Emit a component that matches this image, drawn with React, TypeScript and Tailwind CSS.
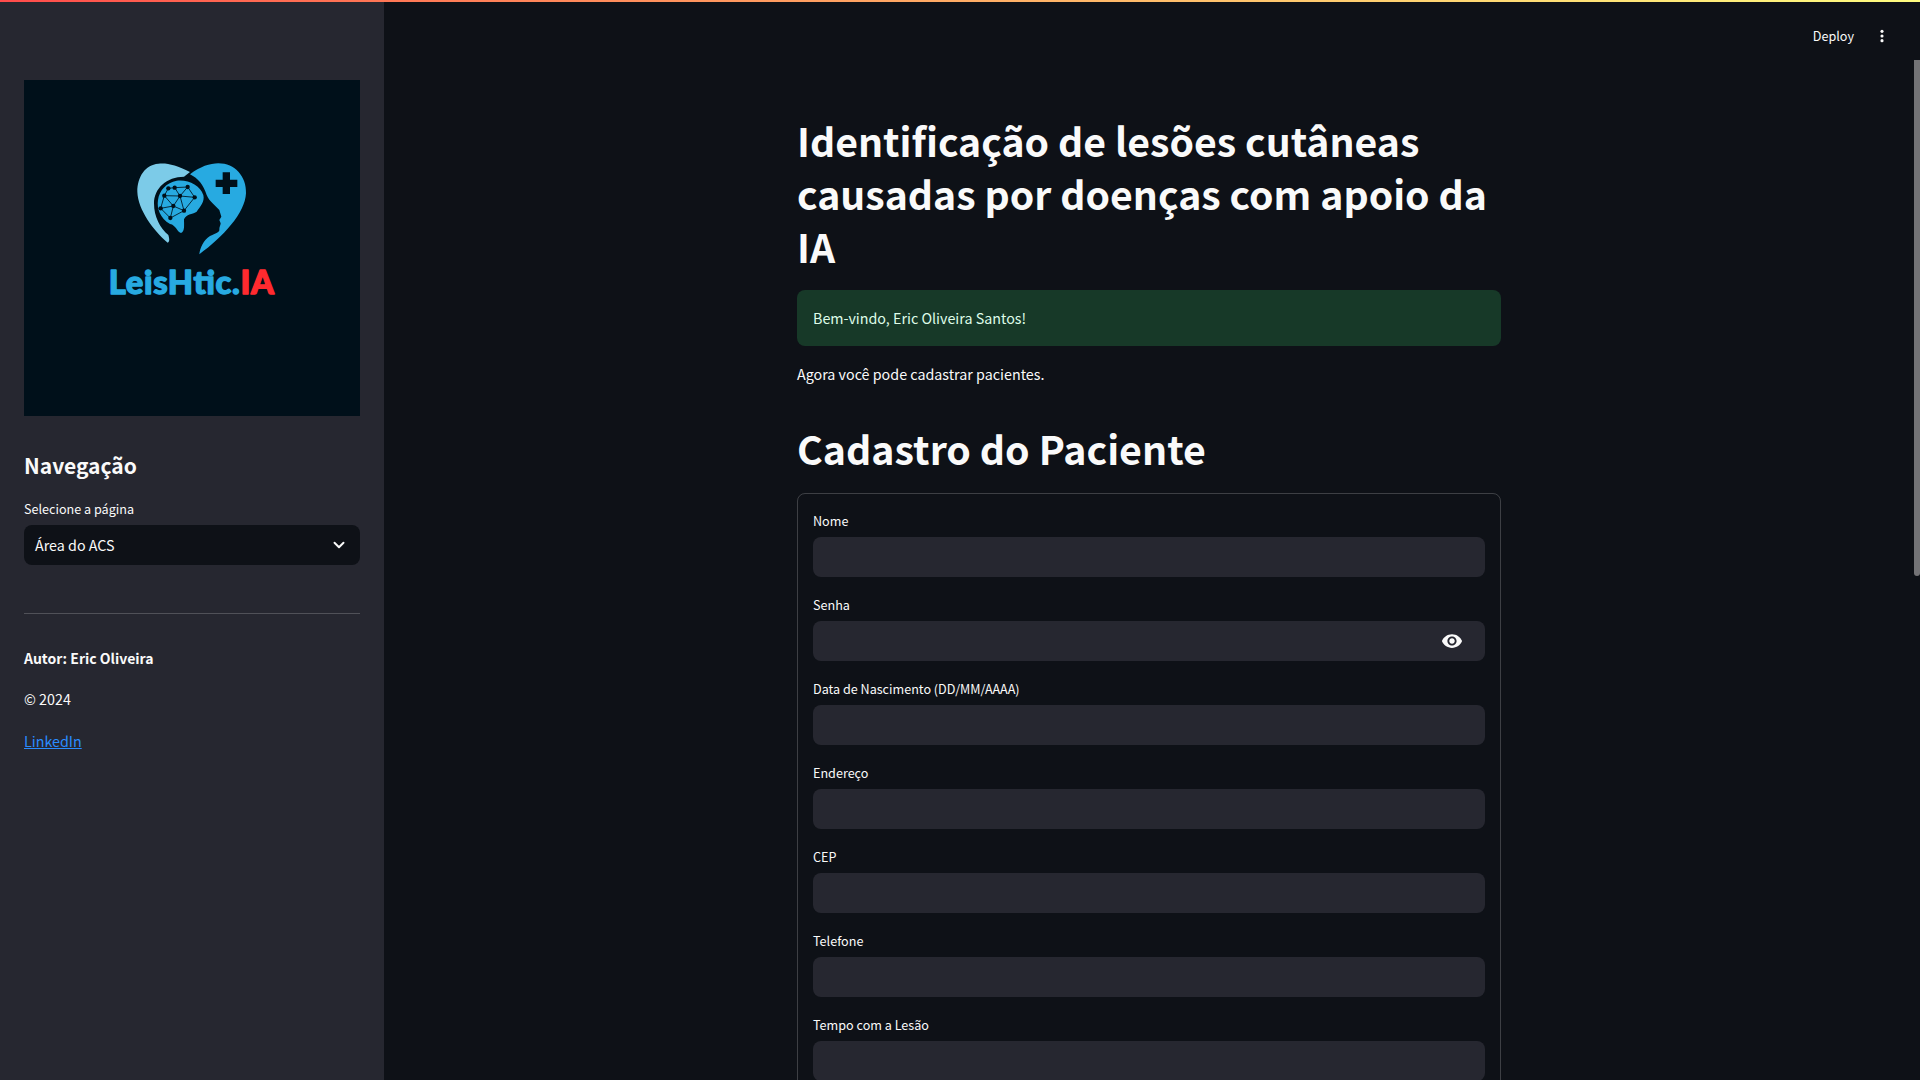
import { ChevronDown } from "lucide-react";

const fields = ["Nome", "Senha", "Data de Nascimento (DD/MM/AAAA)", "Endereço", "CEP", "Telefone", "Tempo com a Lesão"];

const nodes = [
  [524, 383], [563, 381], [493, 407], [540, 408], [584, 412], [520, 438],
  [552, 452], [482, 445], [511, 474], [505, 385],
];

const links = [
  [0, 1], [0, 3], [1, 3], [1, 4], [3, 4], [0, 9], [9, 2], [2, 3], [2, 5], [3, 5],
  [3, 6], [5, 6], [4, 6], [2, 7], [5, 7], [7, 8], [5, 8], [6, 8],
];

function Logo() {
  return (
    <svg viewBox="72 60 1008 1008" className="block w-full h-full">
      <path
        d="M570 336C530 315 500 308 475 311C435 315 412 350 412 395C414 450 460 510 503 548C510 545 508 535 505 525C480 505 462 470 462 430C462 385 500 350 552 350Z"
        fill="#7ccbe8"
      />
      <path
        d="M570 343C600 320 630 310 655 310C705 310 740 350 738 400C735 460 670 530 598 583C600 565 610 540 630 528C650 520 660 515 658 508C658 500 662 495 662 490L658 480L664 470L658 450C645 435 628 425 620 405C610 375 595 355 570 343Z"
        fill="#27aae1"
      />
      <path
        d="M668 337H690V359H712V381H690V402H668V381H647V359H668Z"
        fill="#00101a"
      />
      <path
        d="M530 362C565 358 600 375 610 405C615 425 600 440 590 455C575 465 560 460 552 478C552 495 555 515 543 519C530 515 528 495 510 492C480 475 470 445 474 420C478 390 500 368 530 362Z"
        fill="#27aae1"
      />
      {links.map(([a, b]) => (
        <line
          key={`${a}-${b}`}
          x1={nodes[a][0]}
          y1={nodes[a][1]}
          x2={nodes[b][0]}
          y2={nodes[b][1]}
          stroke="#00101a"
          strokeWidth="2.5"
        />
      ))}
      {nodes.map(([x, y]) => (
        <circle key={`${x}-${y}`} cx={x} cy={y} r="6.5" fill="#00101a" />
      ))}
      <text
        x="326"
        y="703"
        fontFamily="Lato, sans-serif"
        fontWeight="900"
        fontSize="98"
        textLength="496"
        lengthAdjust="spacing"
        strokeWidth="4"
        strokeLinejoin="round"
      >
        <tspan fill="#27aae1" stroke="#27aae1">LeisHtic.</tspan>
        <tspan fill="#ff2a2f" stroke="#ff2a2f">IA</tspan>
      </text>
    </svg>
  );
}

function Field({ label }: { label: string }) {
  return (
    <div className="flex flex-col">
      <label className="h-[28px] text-[12.6px] leading-[20px] pt-[2px] text-[#fafafa]">{label}</label>
      <div className="relative h-10 rounded-lg bg-[#262730]">
        {label === "Senha" && (
          <svg viewBox="0 0 24 24" className="absolute right-[22px] top-[9px] w-[22px] h-[22px]" fill="#fafafa">
            <path d="M12 4.5C7 4.5 2.73 7.61 1 12c1.73 4.39 6 7.5 11 7.5s9.27-3.11 11-7.5c-1.73-4.39-6-7.5-11-7.5zM12 17c-2.76 0-5-2.24-5-5s2.24-5 5-5 5 2.24 5 5-2.24 5-5 5zm0-8c-1.66 0-3 1.34-3 3s1.34 3 3 3 3-1.34 3-3-1.34-3-3-3z" />
          </svg>
        )}
      </div>
    </div>
  );
}

export default function App() {
  return (
    <div className="relative flex h-screen overflow-hidden bg-[#0e1117] text-[#fafafa] font-['Noto_Sans_CJK_SC','Source_Sans_Pro',sans-serif]">
      <div className="absolute inset-x-0 top-0 h-[2px] bg-gradient-to-r from-[#ff4b4b] to-[#fffd80]" />

      <aside className="w-[384px] shrink-0 bg-[#262730] px-6 pt-20">
        <div className="w-[336px] h-[336px] bg-[#00101a]">
          <Logo />
        </div>
        <h2 className="mt-[32px] text-[21px] leading-[34px] font-bold">Navegação</h2>
        <label className="block mt-[17px] text-[12.6px] leading-[20px]">Selecione a página</label>
        <div className="mt-[6px] flex h-10 items-center justify-between rounded-lg bg-[#0e1117] pl-[11px] pr-[12px]">
          <span className="text-[14.3px] leading-6">Área do ACS</span>
          <ChevronDown size={18} strokeWidth={2.6} />
        </div>
        <hr className="mt-12 border-t border-[#fafafa]/20" />
        <p className="mt-[31px] text-[14px] leading-[26px] font-bold">Autor: Eric Oliveira</p>
        <p className="mt-[15px] text-[14.3px] leading-[26px]">© 2024</p>
        <a className="block mt-[16px] text-[14.3px] leading-[26px] text-[#2a8cff] underline">LinkedIn</a>
      </aside>

      <main className="relative flex-1 min-w-0">
        <div className="absolute right-[35px] top-[26px] flex items-center gap-[25px]">
          <span className="text-[12.6px] leading-5">Deploy</span>
          <svg viewBox="0 0 6 18" className="w-[6px] h-[14px]" fill="#fafafa">
            <circle cx="3" cy="3" r="2" />
            <circle cx="3" cy="9" r="2" />
            <circle cx="3" cy="15" r="2" />
          </svg>
        </div>
        <div className="absolute right-0 top-[60px] h-[516px] w-[6px] rounded-b-sm bg-[#737376]" />

        <div className="ml-[413px] w-[704px] pt-[114px]">
          <h1 className="text-[39.2px] leading-[53px] font-bold">
            Identificação de lesões cutâneas causadas por doenças com apoio da IA
          </h1>
          <div className="mt-[17px] flex h-[56px] items-center rounded-lg bg-[#173928] px-4 text-[14.3px] text-[#dffde9]">
            Bem-vindo, Eric Oliveira Santos!
          </div>
          <p className="mt-[15px] text-[14.3px] leading-[26px]">Agora você pode cadastrar pacientes.</p>
          <h2 className="mt-[37px] text-[39.3px] leading-[48px] font-bold">Cadastro do Paciente</h2>
          <form className="mt-[21px] flex flex-col gap-4 rounded-lg border border-[#fafafa]/20 p-[15px] pt-[15px]">
            {fields.map((f) => (
              <Field key={f} label={f} />
            ))}
          </form>
        </div>
      </main>
    </div>
  );
}
